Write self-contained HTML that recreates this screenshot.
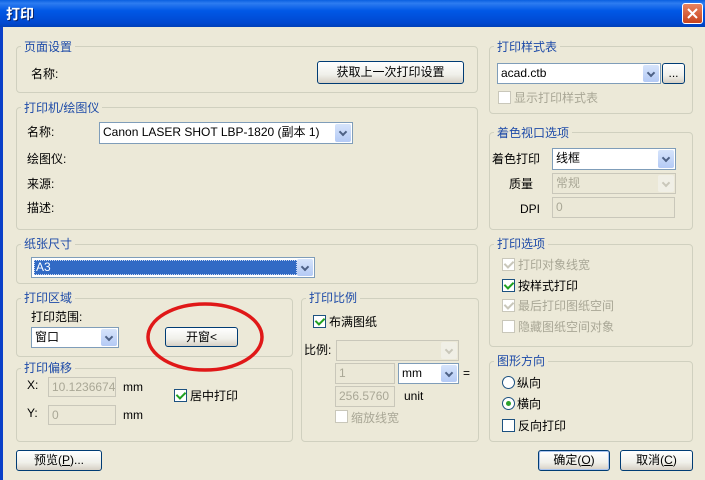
<!DOCTYPE html>
<html><head><meta charset="utf-8"><style>
*{box-sizing:border-box;margin:0;padding:0}
body{width:705px;height:480px;overflow:hidden;background:#ECE9D8;font-family:"Liberation Sans","Noto Sans CJK SC","WenQuanYi Zen Hei",sans-serif;font-size:12px;color:#000;position:relative}
.a{position:absolute}
.title{left:0;top:0;width:705px;height:27px;background:linear-gradient(#0A5FE0 0%,#2D7CF0 12%,#0058E6 40%,#0048D0 85%,#0040B8 100%);}
.title span{position:absolute;left:6px;top:4px;color:#fff;font-weight:bold;font-size:14px;text-shadow:1px 1px #0a246a}
.lb{left:0;top:27px;width:3px;height:453px;background:#0A3FC8}
.close{left:682px;top:3px;width:21px;height:21px;border:1px solid #fff;border-radius:3px;background:linear-gradient(#E8835F,#C8431C)}
.g{position:absolute;border:1px solid #D0D0BF;border-radius:4px}
.gt{position:absolute;background:#ECE9D8;color:#1E4BA8;padding:0 3px;font-size:12px;line-height:14px}
.btn{position:absolute;border:1px solid #003C74;border-radius:3px;background:linear-gradient(#FFFFFF,#F0F0EA 60%,#D6D0C5);text-align:center;line-height:18px}
.cb{position:absolute;border:1px solid #7F9DB9;background:#fff;padding-left:3px;line-height:18px;overflow:hidden;white-space:nowrap}
.cb.d{background:#EBE8D7;border-color:#C9C7BA;color:#A9A796}
.ar{position:absolute;right:1px;top:1px;bottom:1px;width:16px;border-radius:2px;background:linear-gradient(#D6E4FB,#B4CAF5);}
.ar:after{content:"";position:absolute;left:5px;top:5px;width:4px;height:4px;border-right:2px solid #4D6185;border-bottom:2px solid #4D6185;transform:rotate(45deg)}
.d .ar{background:#F0EFE6}.d .ar:after{border-color:#C9C7BA}
.ck{position:absolute;width:13px;height:13px;border:1px solid #1C5180;background:#fff}
.ck.d{border-color:#C9C7BA}
.ck.on:after{content:"";position:absolute;left:3px;top:0px;width:4px;height:7px;border-right:2px solid #21A121;border-bottom:2px solid #21A121;transform:rotate(45deg)}
.ck.d.on:after{border-color:#C9C7BA}
.gray{color:#A9A796}
.rd{position:absolute;width:13px;height:13px;border:1px solid #1C5180;border-radius:50%;background:#fff}
.rd.on:after{content:"";position:absolute;left:3px;top:3px;width:5px;height:5px;border-radius:50%;background:#2DA12D}
.t{position:absolute;white-space:nowrap;line-height:14px}
</style></head><body>
<div class="a title"><span>打印</span></div>
<div class="a lb"></div>
<div class="a close"><svg width="19" height="19" style="position:absolute;left:0;top:0"><path d="M5 5L14 14M14 5L5 14" stroke="#fff" stroke-width="2"/></svg></div>

<!-- groups -->
<div class="g" style="left:16px;top:46px;width:462px;height:47px"></div><div class="gt" style="left:21px;top:40px">页面设置</div>
<div class="g" style="left:16px;top:107px;width:462px;height:123px"></div><div class="gt" style="left:21px;top:101px">打印机/绘图仪</div>
<div class="g" style="left:16px;top:244px;width:462px;height:40px"></div><div class="gt" style="left:21px;top:237px">纸张尺寸</div>
<div class="g" style="left:16px;top:298px;width:277px;height:59px"></div><div class="gt" style="left:21px;top:291px">打印区域</div>
<div class="g" style="left:16px;top:368px;width:277px;height:74px"></div><div class="gt" style="left:21px;top:361px">打印偏移</div>
<div class="g" style="left:301px;top:298px;width:178px;height:144px"></div><div class="gt" style="left:306px;top:291px">打印比例</div>
<div class="g" style="left:489px;top:46px;width:204px;height:68px"></div><div class="gt" style="left:494px;top:40px">打印样式表</div>
<div class="g" style="left:489px;top:132px;width:204px;height:98px"></div><div class="gt" style="left:494px;top:126px">着色视口选项</div>
<div class="g" style="left:489px;top:244px;width:204px;height:103px"></div><div class="gt" style="left:494px;top:237px">打印选项</div>
<div class="g" style="left:489px;top:361px;width:204px;height:81px"></div><div class="gt" style="left:494px;top:354px">图形方向</div>

<!-- page setup -->
<div class="t" style="left:31px;top:67px">名称:</div>
<div class="btn" style="left:317px;top:61px;width:147px;height:23px;line-height:21px">获取上一次打印设置</div>

<!-- printer -->
<div class="t" style="left:27px;top:125px">名称:</div>
<div class="cb" style="left:99px;top:122px;width:254px;height:22px">Canon LASER SHOT LBP-1820 (副本 1)<div class="ar"></div></div>
<div class="t" style="left:27px;top:152px">绘图仪:</div>
<div class="t" style="left:27px;top:177px">来源:</div>
<div class="t" style="left:27px;top:201px">描述:</div>

<!-- paper -->
<div class="cb" style="left:31px;top:257px;width:284px;height:21px;padding:1px"><div style="position:absolute;left:2px;top:2px;width:263px;height:15px;background:#316AC5;border:1px dotted #C9D8F2;color:#fff;line-height:13px;padding-left:1px">A3</div><div class="ar"></div></div>

<!-- area -->
<div class="t" style="left:31px;top:310px">打印范围:</div>
<div class="cb" style="left:31px;top:327px;width:88px;height:21px">窗口<div class="ar"></div></div>
<div class="btn" style="left:165px;top:327px;width:73px;height:20px">开窗&lt;</div>
<svg class="a" style="left:145px;top:300px" width="122" height="76"><ellipse cx="60" cy="37" rx="57" ry="33" fill="none" stroke="#E01818" stroke-width="3.5"/></svg>

<!-- offset -->
<div class="t" style="left:27px;top:378px">X:</div>
<div class="cb d" style="left:48px;top:377px;width:68px;height:20px">10.1236674</div>
<div class="t" style="left:123px;top:380px">mm</div>
<div class="t" style="left:27px;top:406px">Y:</div>
<div class="cb d" style="left:48px;top:405px;width:68px;height:20px">0</div>
<div class="t" style="left:123px;top:408px">mm</div>
<div class="ck on" style="left:174px;top:389px"></div><div class="t" style="left:190px;top:389px">居中打印</div>

<div class="btn" style="left:16px;top:450px;width:86px;height:21px">预览(<u>P</u>)...</div>

<!-- scale -->
<div class="ck on" style="left:313px;top:315px"></div><div class="t" style="left:329px;top:315px">布满图纸</div>
<div class="t" style="left:304px;top:343px">比例:</div>
<div class="cb d" style="left:336px;top:340px;width:123px;height:21px"><div class="ar"></div></div>
<div class="cb d" style="left:335px;top:363px;width:60px;height:21px">1</div>
<div class="cb" style="left:398px;top:363px;width:61px;height:21px">mm<div class="ar"></div></div>
<div class="t" style="left:463px;top:366px">=</div>
<div class="cb d" style="left:335px;top:386px;width:60px;height:21px">256.5760</div>
<div class="t" style="left:404px;top:389px">unit</div>
<div class="ck d" style="left:335px;top:410px"></div><div class="t gray" style="left:351px;top:411px">缩放线宽</div>

<!-- style table -->
<div class="cb" style="left:497px;top:63px;width:164px;height:21px">acad.ctb<div class="ar"></div></div>
<div class="btn" style="left:662px;top:63px;width:23px;height:21px;line-height:19px">...</div>
<div class="ck d" style="left:498px;top:91px"></div><div class="t gray" style="left:514px;top:91px">显示打印样式表</div>

<!-- shaded -->
<div class="t" style="left:492px;top:152px">着色打印</div>
<div class="cb" style="left:552px;top:148px;width:124px;height:22px">线框<div class="ar"></div></div>
<div class="t" style="left:509px;top:177px">质量</div>
<div class="cb d" style="left:552px;top:173px;width:124px;height:21px">常规<div class="ar"></div></div>
<div class="t" style="left:520px;top:202px">DPI</div>
<div class="cb d" style="left:552px;top:197px;width:123px;height:21px">0</div>

<!-- options -->
<div class="ck d on" style="left:502px;top:258px"></div><div class="t gray" style="left:518px;top:258px">打印对象线宽</div>
<div class="ck on" style="left:502px;top:279px"></div><div class="t" style="left:518px;top:279px">按样式打印</div>
<div class="ck d on" style="left:502px;top:299px"></div><div class="t gray" style="left:518px;top:299px">最后打印图纸空间</div>
<div class="ck d" style="left:502px;top:320px"></div><div class="t gray" style="left:518px;top:320px">隐藏图纸空间对象</div>

<!-- orientation -->
<div class="rd" style="left:502px;top:376px"></div><div class="t" style="left:517px;top:376px">纵向</div>
<div class="rd on" style="left:502px;top:397px"></div><div class="t" style="left:517px;top:397px">横向</div>
<div class="ck" style="left:502px;top:419px"></div><div class="t" style="left:518px;top:419px">反向打印</div>

<div class="btn" style="left:538px;top:450px;width:72px;height:21px;border-color:#003C74;box-shadow:inset 0 0 0 1px #A9C3EE">确定(<u>O</u>)</div>
<div class="btn" style="left:620px;top:450px;width:73px;height:21px">取消(<u>C</u>)</div>
</body></html>
